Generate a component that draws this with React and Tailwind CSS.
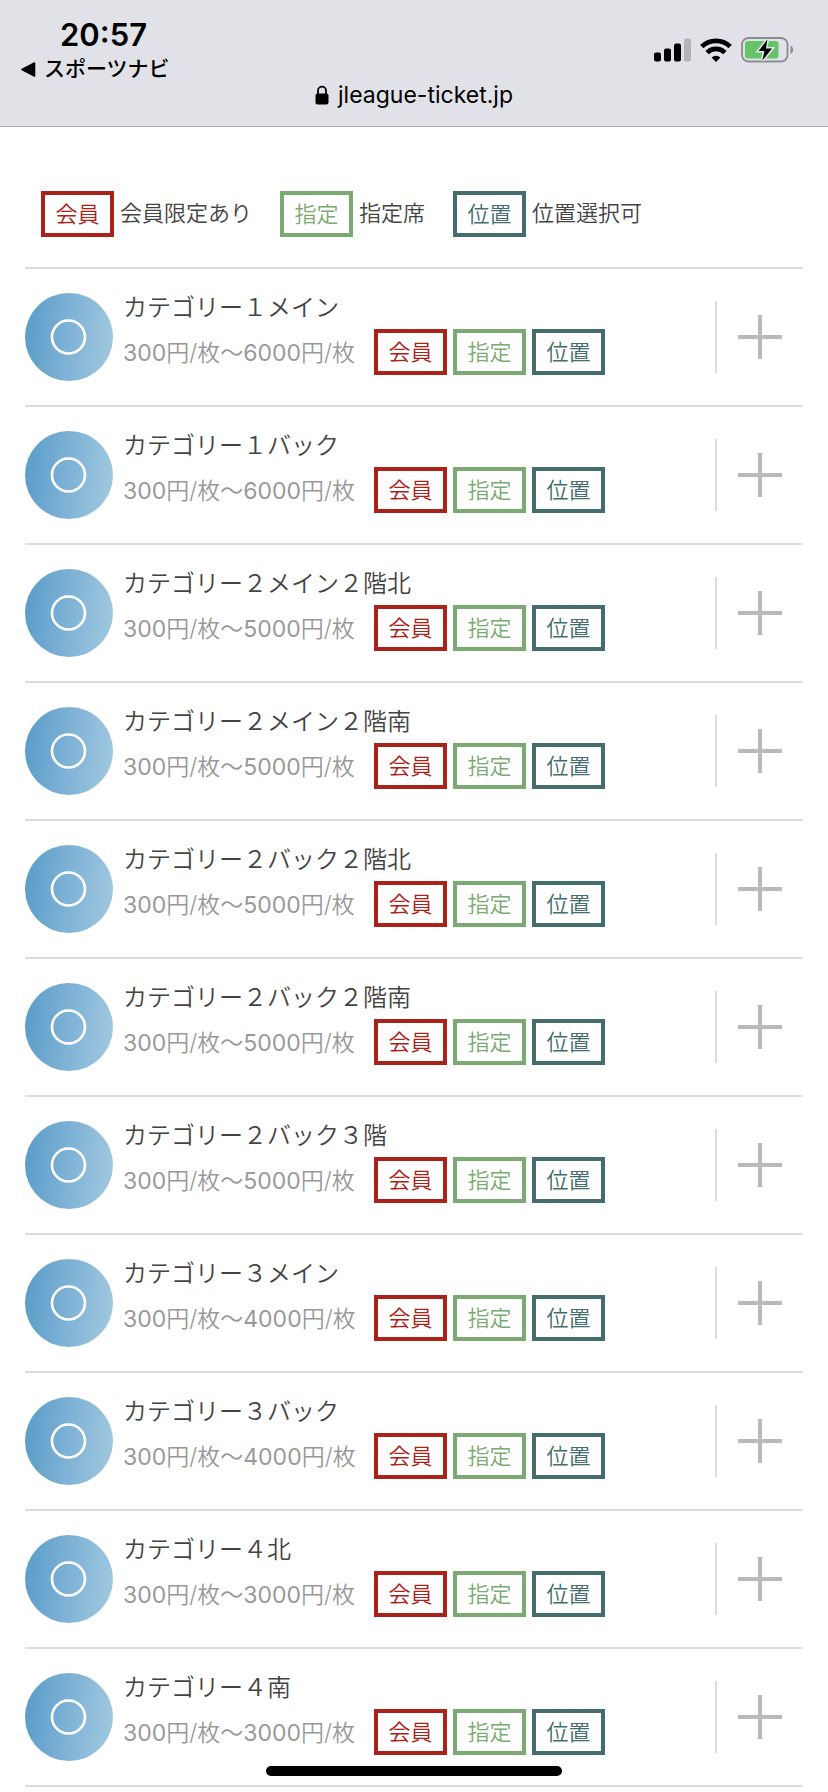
const BADGES = {
  member: { label: '会員', note: '会員限定あり', style: 'border-[#ab2218] text-[#ab2218]' },
  reserved: { label: '指定', note: '指定席', style: 'border-[#7bab73] text-[#7bab73]' },
  position: { label: '位置', note: '位置選択可', style: 'border-[#436d6e] text-[#436d6e]' },
}
const KINDS = ['member', 'reserved', 'position']

const SEATS = [
  { name: 'カテゴリー１メイン', max: 6000 },
  { name: 'カテゴリー１バック', max: 6000 },
  { name: 'カテゴリー２メイン２階北', max: 5000 },
  { name: 'カテゴリー２メイン２階南', max: 5000 },
  { name: 'カテゴリー２バック２階北', max: 5000 },
  { name: 'カテゴリー２バック２階南', max: 5000 },
  { name: 'カテゴリー２バック３階', max: 5000 },
  { name: 'カテゴリー３メイン', max: 4000 },
  { name: 'カテゴリー３バック', max: 4000 },
  { name: 'カテゴリー４北', max: 3000 },
  { name: 'カテゴリー４南', max: 3000 },
]

function Badge({ kind }) {
  const { label, style } = BADGES[kind]
  return (
    <span className={`flex h-[46px] w-[73px] shrink-0 items-center justify-center border-4 text-[22px] leading-6 ${style}`}>
      {label}
    </span>
  )
}

function SignalIcon() {
  return (
    <svg width="37" height="24" viewBox="0 0 37 24" aria-hidden="true">
      <rect x="0" y="14.5" width="7" height="9" rx="2" />
      <rect x="10" y="10.5" width="7" height="13" rx="2" />
      <rect x="20" y="5.5" width="7" height="18" rx="2" />
      <rect x="30" y="0.5" width="7" height="23" rx="2" fill="#b3b4b9" />
    </svg>
  )
}

function WifiIcon() {
  return (
    <svg width="32" height="24" viewBox="0 0 32 24" aria-hidden="true">
      <g fill="none" stroke="#000" strokeWidth="4.8">
        <path d="M1.8 8.6a20.3 20.3 0 0 1 28.4 0" />
        <path d="M7.1 14.6a12.7 12.7 0 0 1 17.8 0" />
      </g>
      <path d="M16 24l-4.4-4.6a6.4 6.4 0 0 1 8.8 0z" />
    </svg>
  )
}

function BatteryIcon() {
  return (
    <svg width="53" height="26" viewBox="0 0 53 26" aria-hidden="true">
      <rect x="1" y="1" width="45.5" height="23.5" rx="6.5" fill="none" stroke="#8b8c90" strokeWidth="1.8" />
      <rect x="4" y="4" width="33.5" height="17.5" rx="3" fill="#65c466" />
      <path d="M49.5 8.6c3.6 1.4 3.6 7 0 8.4z" fill="#8b8c90" />
      <path
        d="M26.4 2.4L17.6 14h5.8L21.4 23.4 31 11.6h-6z"
        stroke="#e1e2e7"
        strokeWidth="3.2"
        paintOrder="stroke"
      />
    </svg>
  )
}

function LockIcon() {
  return (
    <svg width="14" height="20" viewBox="0 0 14 20" aria-hidden="true">
      <rect x="0.5" y="8.5" width="13" height="11" rx="2" />
      <path d="M3 9V5.6a4 4 0 0 1 8 0V9" fill="none" stroke="#000" strokeWidth="1.8" />
    </svg>
  )
}

function SeatRow({ seat }) {
  return (
    <li className="flex items-start border-b-2 border-[#dcdcdc] py-6">
      <svg className="shrink-0" width="88" height="88" viewBox="0 0 88 88" aria-hidden="true">
        <defs>
          <linearGradient id="disc" x1="0" y1="0.45" x2="1" y2="0.55">
            <stop offset="0" stopColor="#5b9ec9" />
            <stop offset="0.5" stopColor="#7fb2d6" />
            <stop offset="1" stopColor="#a0c8df" />
          </linearGradient>
        </defs>
        <circle cx="44" cy="44" r="44" fill="url(#disc)" />
        <circle cx="43.5" cy="44" r="16.5" fill="none" stroke="#fff" strokeWidth="2.6" />
      </svg>
      <div className="min-w-0 flex-1 pl-2.5">
        <h2 className="text-2xl leading-[30px] font-[350]">{seat.name}</h2>
        <div className="mt-1.5 flex items-center gap-1.5">
          <span className="w-[245px] pt-0.5 text-[23px] leading-6 whitespace-nowrap text-[#999]">
            <span className="font-normal">300</span>円/枚〜
            <span className="font-normal">{seat.max}</span>円/枚
          </span>
          {KINDS.map((kind) => (
            <Badge key={kind} kind={kind} />
          ))}
        </div>
      </div>
      <button
        type="button"
        aria-label={`${seat.name}を開く`}
        className="flex h-[72px] w-[88px] shrink-0 items-center justify-center self-center border-l-2 border-[#dcdcdc]"
      >
        <svg width="44" height="44" viewBox="0 0 44 44" aria-hidden="true">
          <path d="M22 0v44M0 22h44" stroke="#bababa" strokeWidth="4" />
        </svg>
      </button>
    </li>
  )
}

export default function App() {
  return (
    <div
      lang="ja"
      className="min-h-screen bg-white font-['Inter','Noto_Sans_CJK_JP',sans-serif] font-[350] text-[#444]"
    >
      <header className="border-b border-[#acadb1] bg-[#e1e2e7] text-black">
        <div className="flex h-20 items-start justify-between pt-[19px] pr-[34px] pl-5">
          <div className="flex flex-col">
            <time className="pl-10 text-[31px] leading-8 font-semibold">20:57</time>
            <a href="#back" className="mt-1 flex items-center gap-2 text-[21px] leading-7 font-medium">
              <svg width="16" height="15" viewBox="0 0 16 15" aria-hidden="true">
                <path d="M14.5 1v13L2 7.5z" stroke="#000" strokeWidth="1.6" strokeLinejoin="round" />
              </svg>
              スポーツナビ
            </a>
          </div>
          <div className="flex items-center gap-[9px] pt-[18px]">
            <SignalIcon />
            <WifiIcon />
            <BatteryIcon />
          </div>
        </div>
        <div className="flex h-[46px] items-start justify-center font-normal">
          <div className="flex items-center gap-[9px] text-[23px] leading-[30px]">
            <LockIcon />
            jleague-ticket.jp
          </div>
        </div>
      </header>

      <main className="px-[25px]">
        <ul className="flex gap-7 border-b-2 border-[#dcdcdc] px-4 pt-16 pb-[30px]">
          {KINDS.map((kind) => (
            <li key={kind} className="flex items-center gap-1.5">
              <Badge kind={kind} />
              <span className="pb-0.5 text-[22px] leading-6 whitespace-nowrap">{BADGES[kind].note}</span>
            </li>
          ))}
        </ul>
        <ul>
          {SEATS.map((seat) => (
            <SeatRow key={seat.name} seat={seat} />
          ))}
        </ul>
      </main>

      <div className="fixed bottom-4 left-1/2 h-2.5 w-[296px] -translate-x-1/2 rounded-full bg-black" />
    </div>
  )
}
